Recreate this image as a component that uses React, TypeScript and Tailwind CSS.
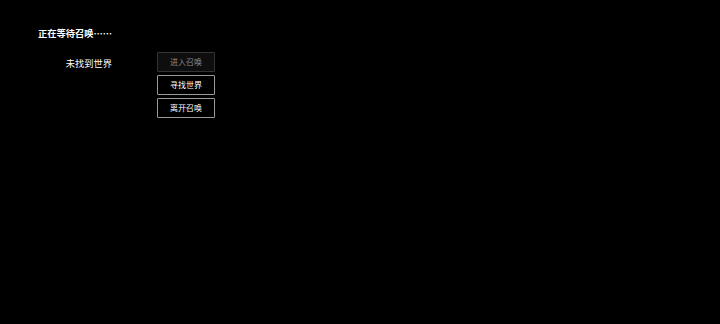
const font = { fontFamily: '"Noto Sans CJK SC", "Noto Sans", sans-serif' }

export default function App() {
  const buttons = [
    { label: '进入召唤', disabled: true },
    { label: '寻找世界', disabled: false },
    { label: '离开召唤', disabled: false },
  ]

  return (
    <div className="w-[720px] h-[324px] bg-black text-white overflow-hidden" style={font}>
      <div className="pl-[38px] pt-[26px]">
        <div className="text-[9.25px] leading-[14px] font-bold">正在等待召唤……</div>
        <div className="flex mt-[12px]">
          <div className="w-[74px] flex justify-end pt-[4px] text-[9.25px] leading-[14px]">未找到世界</div>
          <div className="ml-[45px] flex flex-col gap-[3px]">
            {buttons.map(b => (
              <button
                key={b.label}
                disabled={b.disabled}
                className={`w-[58px] h-[20px] flex items-center justify-center text-[8px] leading-none border rounded-[1px] ${
                  b.disabled
                    ? 'bg-[#0e0e0e] border-[#333333] text-[#8a8a8a]'
                    : 'bg-black border-[#9a9a9a] text-white'
                }`}
              >
                {b.label}
              </button>
            ))}
          </div>
        </div>
      </div>
    </div>
  )
}
